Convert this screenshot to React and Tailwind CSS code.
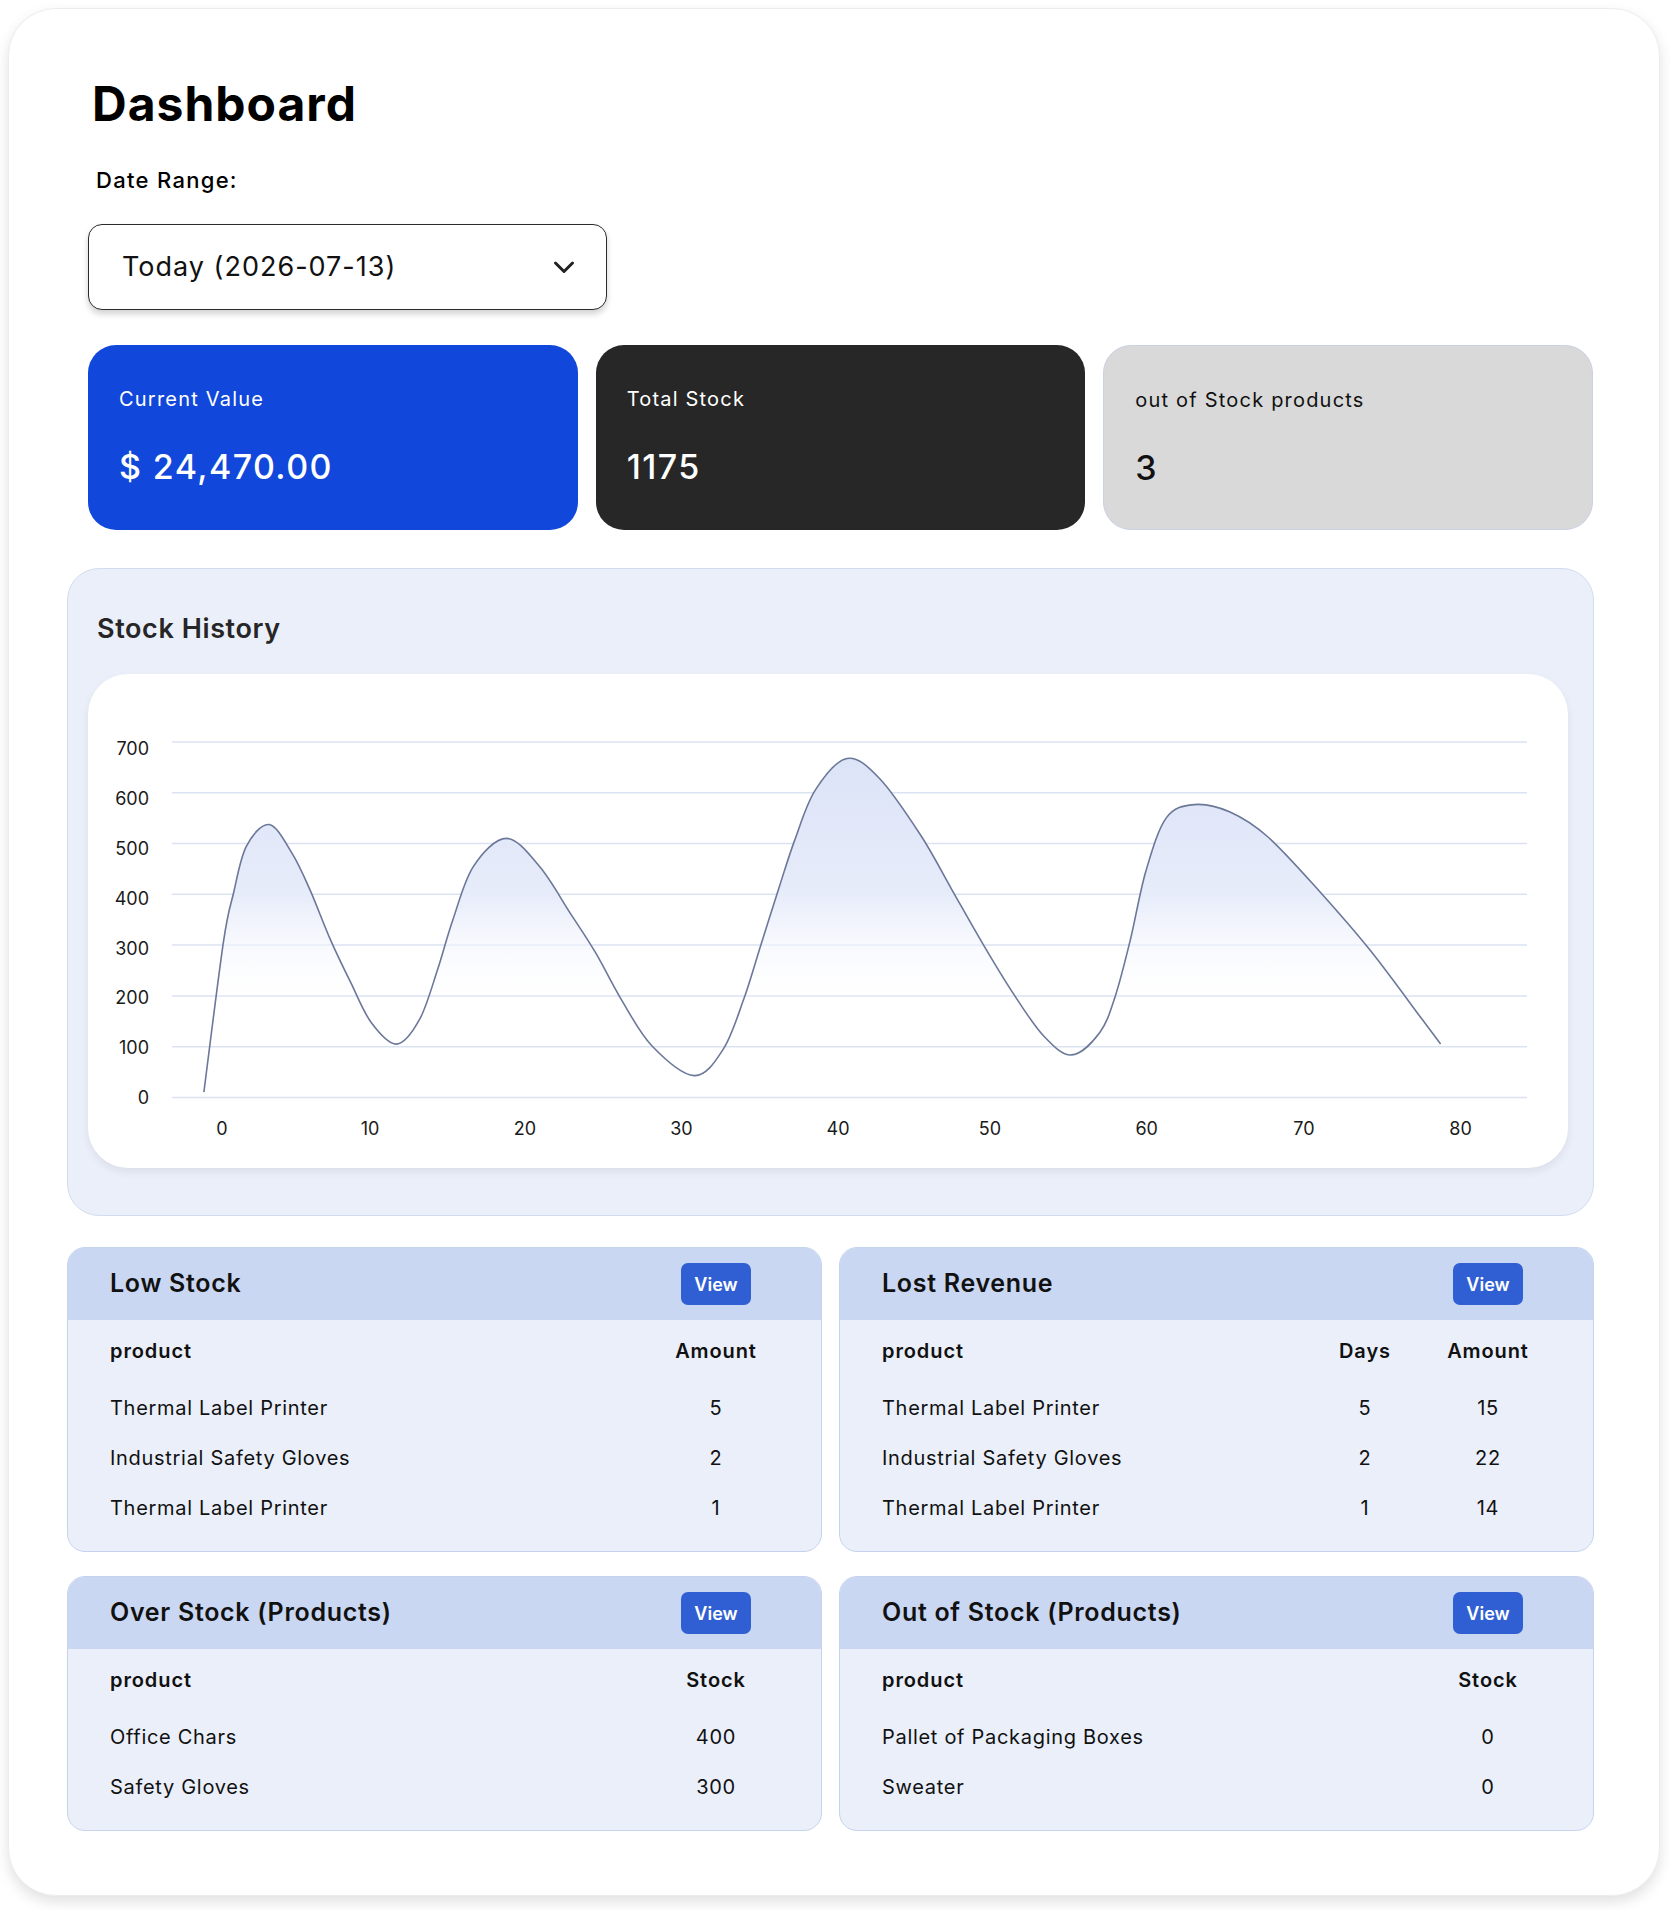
import React from "react";

const curvePts = [
  [203.9, 1091.2], [223.3, 941.9], [233.5, 892.2], [246.2, 845.7], [269.2, 823.5],
  [292.1, 852.4], [310, 888.9], [330.4, 938.6], [350.8, 981.7], [371.2, 1021.5],
  [396.7, 1043.1], [419.7, 1018.2], [437.6, 968.5], [452.9, 918.7], [473.3, 865.6],
  [506.4, 837.4], [539.6, 865.6], [570.2, 912.1], [595.7, 951.9], [621.2, 998.3],
  [651.8, 1044.7], [694.2, 1074.6], [723.3, 1048.1], [743.7, 998.3], [761.5, 941.9],
  [779.4, 885.5], [794.7, 839.1], [815.1, 789.4], [847, 757.5], [880, 778],
  [921.2, 835], [951.8, 888.6], [982.4, 942.1], [1013, 992.1], [1043.7, 1035],
  [1071.7, 1053.9], [1099.8, 1031.4], [1115.1, 995.7], [1130.4, 938.6], [1145.7, 870.7],
  [1166.1, 817.1], [1194.2, 803.6], [1230, 811], [1268, 836], [1319.2, 890],
  [1370.2, 949.3], [1421.2, 1017.1], [1440.6, 1042.9],
];

function toPath(pts) {
  let d = `M${pts[0][0]},${pts[0][1]}`;
  for (let i = 0; i < pts.length - 1; i++) {
    const p0 = pts[i - 1] || pts[i];
    const p1 = pts[i];
    const p2 = pts[i + 1];
    const p3 = pts[i + 2] || p2;
    const c1x = p1[0] + (p2[0] - p0[0]) / 6;
    const c1y = p1[1] + (p2[1] - p0[1]) / 6;
    const c2x = p2[0] - (p3[0] - p1[0]) / 6;
    const c2y = p2[1] - (p3[1] - p1[1]) / 6;
    d += ` C${c1x.toFixed(1)},${c1y.toFixed(1)} ${c2x.toFixed(1)},${c2y.toFixed(1)} ${p2[0]},${p2[1]}`;
  }
  return d;
}

const linePath = toPath(curvePts);
const areaPath = `${linePath} L1440.6,1097 L203.9,1097 Z`;

const yTicks = [700, 600, 500, 400, 300, 200, 100, 0];
const yFor = (v) => 1096.5 - (v / 100) * 50.8;
const yLabel = (v) => 1096.5 - (v / 100) * 49.8 + 6.5;
const xTicks = [
  ["0", 222],
  ["10", 370],
  ["20", 525],
  ["30", 681.5],
  ["40", 838],
  ["50", 990],
  ["60", 1146.7],
  ["70", 1303.9],
  ["80", 1460.5],
];

function StockChart() {
  return (
    <svg width="1480" height="494" viewBox="88 673 1480 494" className="block">
      <defs>
        <linearGradient id="areaFill" gradientUnits="userSpaceOnUse" x1="0" y1="750" x2="0" y2="1010">
          <stop offset="0" stopColor="#dbe3f7" />
          <stop offset="0.55" stopColor="#e7ecfa" />
          <stop offset="1" stopColor="#ffffff" stopOpacity="0" />
        </linearGradient>
      </defs>
      {yTicks.map((v) => (
        <g key={v}>
          <line x1="172" x2="1527" y1={yFor(v)} y2={yFor(v)} stroke="#dbe3f2" strokeWidth="1.5" />
          <text
            x="149"
            y={yLabel(v)}
            textAnchor="end"
            fontSize="18"
            fill="#1a1a1a"
            fontFamily="Inter, sans-serif"
          >
            {v}
          </text>
        </g>
      ))}
      <path d={areaPath} fill="url(#areaFill)" />
      <path d={linePath} fill="none" stroke="#6b7899" strokeWidth="1.6" strokeLinejoin="round" />
      {xTicks.map(([t, x]) => (
        <text
          key={t}
          x={x}
          y="1134"
          textAnchor="middle"
          fontSize="18"
          fill="#1a1a1a"
          fontFamily="Inter, sans-serif"
        >
          {t}
        </text>
      ))}
    </svg>
  );
}

function StatCard({ label, value, className }) {
  return (
    <div className={`rounded-[28px] px-[31px] pt-[40px] pb-[44px] ${className}`}>
      <div className="text-[20px] leading-[28px] tracking-[1.2px]">{label}</div>
      <div className="mt-[37px] text-[34px] leading-[34px] font-medium tracking-[1.4px]">{value}</div>
    </div>
  );
}

function TableCard({ title, columns, cols, rows }) {
  return (
    <div className="rounded-[18px] border border-[#c6d3ee] bg-[#eaeffa] overflow-hidden">
      <div className="flex h-[72px] items-center justify-between bg-[#c9d7f2] pl-[42px] pr-[63px]">
        <div className="text-[25px] font-semibold tracking-[0.7px] text-[#111]">{title}</div>
        <div className="flex w-[84px] justify-center">
          <button className="h-[42px] w-[70px] rounded-[7px] bg-[#2f5fd2] text-[18px] font-semibold text-white">
            View
          </button>
        </div>
      </div>
      <div className="pl-[42px] pr-[63px] pt-[11px] pb-[18px]">
        <div className={`grid h-[40px] items-center gap-x-[55px] ${cols}`}>
          {columns.map((c, i) => (
            <div
              key={c}
              className={`text-[20px] font-semibold tracking-[0.9px] text-[#111] whitespace-nowrap ${i === 0 ? "" : "text-center"}`}
            >
              {c}
            </div>
          ))}
        </div>
        <div className="mt-[12px]">
          {rows.map((r, ri) => (
            <div key={ri} className={`grid h-[50px] items-center gap-x-[55px] ${cols}`}>
              {r.map((cell, i) => (
                <div
                  key={i}
                  className={`text-[20px] tracking-[0.7px] text-[#111] whitespace-nowrap ${i === 0 ? "" : "text-center"}`}
                >
                  {cell}
                </div>
              ))}
            </div>
          ))}
        </div>
      </div>
    </div>
  );
}

export default function App() {
  return (
    <div className="bg-white pt-2 pl-2 pr-[10px] pb-4 font-['Inter',sans-serif] text-[#111]">
      <div className="rounded-[48px] border border-[#ededed] bg-white pl-[58px] pr-[65px] pt-[71px] pb-[64px] shadow-[0_6px_14px_rgba(0,0,0,0.12)]">
        <div className="ml-[21px] mr-[1px]">
          <h1 className="ml-[4px] text-[48px] font-bold leading-[48px] tracking-[1px] text-black">Dashboard</h1>
          <div className="mt-[38px] ml-[8px] text-[22px] font-medium leading-[28px] tracking-[1.3px] text-black">
            Date Range:
          </div>
          <div className="mt-[30px] flex h-[86px] w-[519px] items-center justify-between rounded-[14px] border border-[#2b2b2b] bg-white pl-[33px] pr-[31px] shadow-[0_4px_6px_rgba(0,0,0,0.18)]">
            <span className="text-[27px] tracking-[1px] text-[#111]">Today (2026-07-13)</span>
            <svg width="22" height="15" viewBox="0 0 22 15">
              <polyline
                points="2.5,3 11,11.5 19.5,3"
                fill="none"
                stroke="#222"
                strokeWidth="3"
                strokeLinecap="round"
                strokeLinejoin="round"
              />
            </svg>
          </div>
          <div className="mt-[35px] grid grid-cols-3 gap-x-[18px]">
            <StatCard label="Current Value" value="$ 24,470.00" className="bg-[#1147db] text-white" />
            <StatCard label="Total Stock" value="1175" className="bg-[#272727] text-white" />
            <StatCard
              label="out of Stock products"
              value="3"
              className="border border-[#c9d1e4] bg-[#d9d9d9] text-[#111]"
            />
          </div>
        </div>

        <div className="mt-[38px] rounded-[32px] border border-[#d3dcef] bg-[#eaeffa] pt-[44px] pb-[47px]">
          <div className="ml-[29px] text-[27px] font-semibold leading-[32px] tracking-[0.6px] text-[#262626]">
            Stock History
          </div>
          <div className="mt-[29px] ml-[20px] mr-[25px] overflow-hidden rounded-[40px] bg-white shadow-[0_4px_8px_rgba(0,0,0,0.07)]">
            <StockChart />
          </div>
        </div>

        <div className="mt-[31px] grid grid-cols-2 gap-x-[17px] gap-y-[24px]">
          <TableCard
            title="Low Stock"
            columns={["product", "Amount"]}
            cols="grid-cols-[1fr_84px]"
            rows={[
              ["Thermal Label Printer", "5"],
              ["Industrial Safety Gloves", "2"],
              ["Thermal Label Printer", "1"],
            ]}
          />
          <TableCard
            title="Lost Revenue"
            columns={["product", "Days", "Amount"]}
            cols="grid-cols-[1fr_52px_84px]"
            rows={[
              ["Thermal Label Printer", "5", "15"],
              ["Industrial Safety Gloves", "2", "22"],
              ["Thermal Label Printer", "1", "14"],
            ]}
          />
          <TableCard
            title="Over Stock (Products)"
            columns={["product", "Stock"]}
            cols="grid-cols-[1fr_84px]"
            rows={[
              ["Office Chars", "400"],
              ["Safety Gloves", "300"],
            ]}
          />
          <TableCard
            title="Out of Stock (Products)"
            columns={["product", "Stock"]}
            cols="grid-cols-[1fr_84px]"
            rows={[
              ["Pallet of Packaging Boxes", "0"],
              ["Sweater", "0"],
            ]}
          />
        </div>
      </div>
    </div>
  );
}
